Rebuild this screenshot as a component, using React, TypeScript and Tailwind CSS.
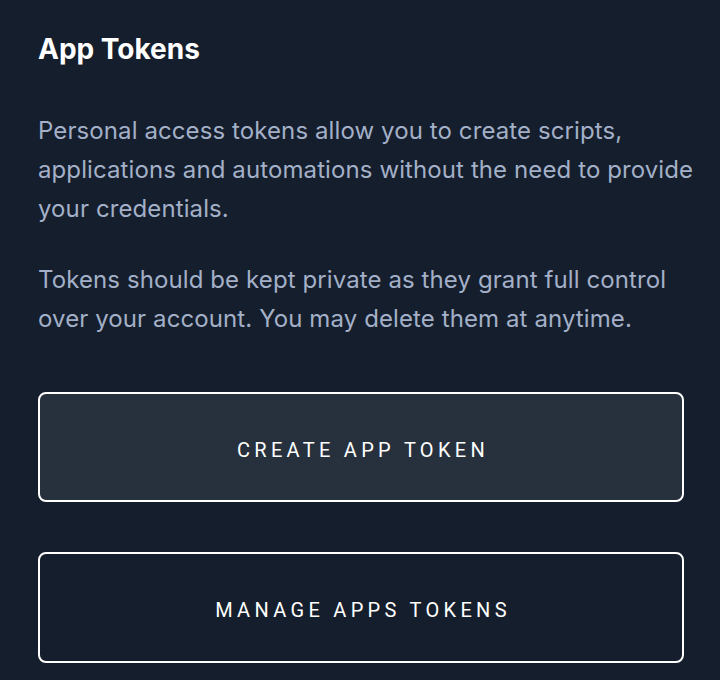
export default function App() {
  return (
    <div className="min-h-[680px] w-full bg-[#151e2c] pr-[12px] pl-[38px] pt-[28px] font-['Inter','Liberation_Sans',sans-serif]">
      <h1 className="text-[28px] font-bold leading-[42px] text-white">App Tokens</h1>
      <div className="mt-[41px] text-[24px] leading-[39px] tracking-[0.1px] text-[#a3b0c8]">
        <p>
          Personal access tokens allow you to create scripts, applications and automations without the need to
          provide your credentials.
        </p>
        <p className="mt-[32px]">
          Tokens should be kept private as they grant full control over your account. You may delete them at anytime.
        </p>
      </div>
      <div className="mt-[54px] flex w-[646px] flex-col gap-[50px]">
        <button className="h-[110px] rounded-lg border-2 border-white bg-[#27313d] pt-[5px] pl-[4px] font-['Roboto',sans-serif] text-[20px] font-normal tracking-[4.3px] text-white">
          CREATE APP TOKEN
        </button>
        <button className="h-[111px] rounded-lg border-2 border-white bg-transparent pt-[5px] pl-[4px] font-['Roboto',sans-serif] text-[20px] font-normal tracking-[4.3px] text-white">
          MANAGE APPS TOKENS
        </button>
      </div>
    </div>
  );
}
